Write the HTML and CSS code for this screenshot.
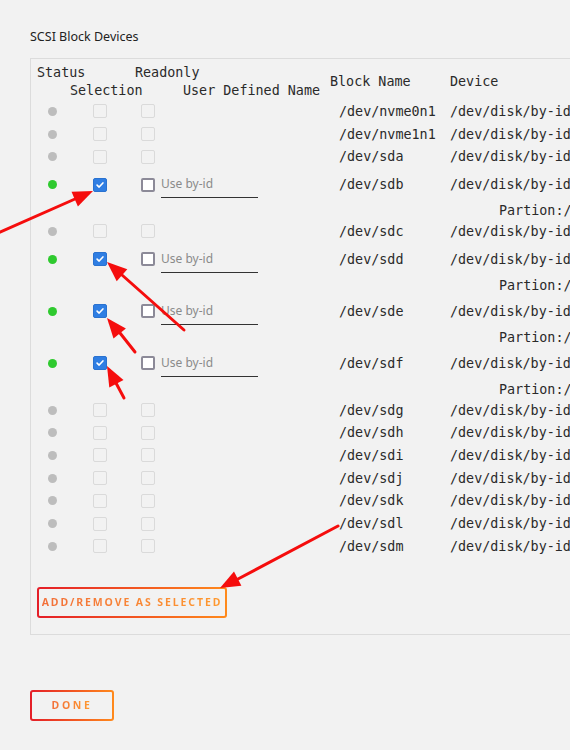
FILE: index.html
```html
<!DOCTYPE html>
<html lang="en">
<head>
  <meta charset="UTF-8">
  <meta name="viewport" content="width=device-width, initial-scale=1.0">
  <title>SCSI Block Devices</title>
  <link rel="stylesheet" href="styles.css">
</head>
<body>

  <div class="page">
    <h2 class="title">SCSI Block Devices</h2>

    <div class="panel">
      <div class="devices">
        <div class="head">
          <div class="head-pair">
            <div class="head-line"><span class="h-status">Status</span><span class="h-readonly">Readonly</span></div>
            <div class="head-line"><span class="h-selection">Selection</span><span class="h-name">User Defined Name</span></div>
          </div>
          <div class="h-block">Block Name</div>
          <div class="h-device">Device</div>
        </div>

        <div class="row">
          <span class="dot"></span><span class="box off"></span><span class="box off"></span><span></span>
          <span class="block">/dev/nvme0n1</span><span class="dev">/dev/disk/by-id/nvme-Samsung_SSD_970_EVO_Plus_1TB_S4EWNX0N</span>
        </div>
        <div class="row">
          <span class="dot"></span><span class="box off"></span><span class="box off"></span><span></span>
          <span class="block">/dev/nvme1n1</span><span class="dev">/dev/disk/by-id/nvme-Samsung_SSD_970_EVO_Plus_1TB_S4EWNX0R</span>
        </div>
        <div class="row">
          <span class="dot"></span><span class="box off"></span><span class="box off"></span><span></span>
          <span class="block">/dev/sda</span><span class="dev">/dev/disk/by-id/ata-WDC_WD40EFRX-68N32N0_WD-WCC7K1</span>
        </div>

        <div class="row sel">
          <span class="dot on"></span><span class="box checked"></span><span class="box ro"></span>
          <span class="name"><input type="text" placeholder="Use by-id"></span>
          <span class="block">/dev/sdb</span><span class="dev">/dev/disk/by-id/ata-ST4000VN008-2DR166_ZGY5A1</span>
        </div>
        <div class="part"><span class="dev">Partion:/dev/disk/by-id/ata-ST4000VN008-2DR166_ZGY5A1-part1</span></div>

        <div class="row">
          <span class="dot"></span><span class="box off"></span><span class="box off"></span><span></span>
          <span class="block">/dev/sdc</span><span class="dev">/dev/disk/by-id/ata-WDC_WD40EFRX-68N32N0_WD-WCC7K2</span>
        </div>

        <div class="row sel">
          <span class="dot on"></span><span class="box checked"></span><span class="box ro"></span>
          <span class="name"><input type="text" placeholder="Use by-id"></span>
          <span class="block">/dev/sdd</span><span class="dev">/dev/disk/by-id/ata-ST4000VN008-2DR166_ZGY5B7</span>
        </div>
        <div class="part"><span class="dev">Partion:/dev/disk/by-id/ata-ST4000VN008-2DR166_ZGY5B7-part1</span></div>

        <div class="row sel">
          <span class="dot on"></span><span class="box checked"></span><span class="box ro"></span>
          <span class="name"><input type="text" placeholder="Use by-id"></span>
          <span class="block">/dev/sde</span><span class="dev">/dev/disk/by-id/ata-ST4000VN008-2DR166_ZGY5C3</span>
        </div>
        <div class="part"><span class="dev">Partion:/dev/disk/by-id/ata-ST4000VN008-2DR166_ZGY5C3-part1</span></div>

        <div class="row sel">
          <span class="dot on"></span><span class="box checked"></span><span class="box ro"></span>
          <span class="name"><input type="text" placeholder="Use by-id"></span>
          <span class="block">/dev/sdf</span><span class="dev">/dev/disk/by-id/ata-ST4000VN008-2DR166_ZGY5D9</span>
        </div>
        <div class="part"><span class="dev">Partion:/dev/disk/by-id/ata-ST4000VN008-2DR166_ZGY5D9-part1</span></div>

        <div class="row">
          <span class="dot"></span><span class="box off"></span><span class="box off"></span><span></span>
          <span class="block">/dev/sdg</span><span class="dev">/dev/disk/by-id/ata-WDC_WD40EFRX-68N32N0_WD-WCC7K3</span>
        </div>
        <div class="row">
          <span class="dot"></span><span class="box off"></span><span class="box off"></span><span></span>
          <span class="block">/dev/sdh</span><span class="dev">/dev/disk/by-id/ata-WDC_WD40EFRX-68N32N0_WD-WCC7K4</span>
        </div>
        <div class="row">
          <span class="dot"></span><span class="box off"></span><span class="box off"></span><span></span>
          <span class="block">/dev/sdi</span><span class="dev">/dev/disk/by-id/ata-WDC_WD40EFRX-68N32N0_WD-WCC7K5</span>
        </div>
        <div class="row">
          <span class="dot"></span><span class="box off"></span><span class="box off"></span><span></span>
          <span class="block">/dev/sdj</span><span class="dev">/dev/disk/by-id/ata-WDC_WD40EFRX-68N32N0_WD-WCC7K6</span>
        </div>
        <div class="row">
          <span class="dot"></span><span class="box off"></span><span class="box off"></span><span></span>
          <span class="block">/dev/sdk</span><span class="dev">/dev/disk/by-id/ata-WDC_WD40EFRX-68N32N0_WD-WCC7K7</span>
        </div>
        <div class="row">
          <span class="dot"></span><span class="box off"></span><span class="box off"></span><span></span>
          <span class="block">/dev/sdl</span><span class="dev">/dev/disk/by-id/ata-WDC_WD40EFRX-68N32N0_WD-WCC7K8</span>
        </div>
        <div class="row">
          <span class="dot"></span><span class="box off"></span><span class="box off"></span><span></span>
          <span class="block">/dev/sdm</span><span class="dev">/dev/disk/by-id/ata-WDC_WD40EFRX-68N32N0_WD-WCC7K9</span>
        </div>
      </div>

      <button class="btn wide"><span>ADD/REMOVE AS SELECTED</span></button>
    </div>

    <button class="btn done"><span>DONE</span></button>
  </div>

  <!-- annotation arrows drawn over the page -->
  <svg class="arrows" width="570" height="750" viewBox="0 0 570 750">
    <g stroke="#f50d0d" stroke-width="3" fill="none" stroke-linecap="round">
      <line x1="-2" y1="233" x2="75" y2="199"/>
      <line x1="184" y1="330" x2="122" y2="275"/>
      <line x1="135" y1="352" x2="120" y2="333"/>
      <line x1="124" y1="398" x2="116" y2="383"/>
      <line x1="338" y1="526" x2="238" y2="579"/>
    </g>
    <g fill="#f50d0d">
      <polygon points="93,191 77.9,206.4 71.5,191.8"/>
      <polygon points="107,262 127.3,269.2 116.7,281.2"/>
      <polygon points="107,318 125.9,328.4 113.5,338.6"/>
      <polygon points="107,366 123.5,379.9 109.3,387.4"/>
      <polygon points="220,588 234,571.6 241.4,585.8"/>
    </g>
  </svg>

</body>
</html>
```

FILE: styles.css
```css
html, body {
  margin: 0;
  padding: 0;
  overflow: hidden;
  background-color: #f2f2f2;
}
body {
  font-family: 'Noto Sans', 'Open Sans', sans-serif;
  color: #222;
  width: 570px;
  height: 750px;
  position: relative;
}
.page {
  padding: 29px 0 0 30px;
}
.title {
  margin: 0 0 13px 0;
  font-size: 12.5px;
  font-weight: 400;
  line-height: 16px;
  color: #222;
}
.panel {
  width: 900px;
  border: 1px solid #dcdcdc;
  padding: 4px 0 16px 6px;
}
.devices {
  font-family: 'DejaVu Sans Mono', 'Liberation Mono', monospace;
  font-size: 13.4px;
  color: #2a2a2a;
  white-space: nowrap;
}
.head {
  display: flex;
  align-items: center;
  height: 37px;
}
.head-pair {
  width: 293px;
}
.head-line {
  height: 18px;
  line-height: 18px;
}
.h-status {
  display: inline-block;
  width: 98px;
}
.h-selection {
  display: inline-block;
  margin-left: 33px;
  width: 113px;
}
.h-block {
  width: 120px;
}
.row, .part {
  display: grid;
  grid-template-columns: 39px 48px 37px 178px 111px 1fr;
  align-items: center;
  height: 22.7px;
}
.row.sel {
  height: 33px;
}
.part {
  height: 19px;
}
.part .dev {
  grid-column: 6;
  padding-left: 49px;
}
.dot {
  width: 9px;
  height: 9px;
  border-radius: 50%;
  background-color: #bdbdbd;
  margin-left: 11px;
}
.dot.on {
  background-color: #2fca2f;
}
.box {
  width: 14px;
  height: 14px;
  box-sizing: border-box;
  border-radius: 2px;
  margin-left: 17px;
}
.box.off {
  border: 1.5px solid #dadada;
}
.box.ro {
  border: 2px solid #8c8a98;
  background-color: #fff;
}
.box.checked {
  background-color: #2f7ee3;
  background-image: url("data:image/svg+xml,%3Csvg xmlns='http://www.w3.org/2000/svg' viewBox='0 0 14 14'%3E%3Cpath d='M3.6 7.2 L6 9.4 L10.4 4.6' stroke='white' stroke-width='1.9' fill='none' stroke-linecap='round' stroke-linejoin='round'/%3E%3C/svg%3E");
  border: 1px solid #2a72d0;
}
.name input {
  width: 97px;
  box-sizing: border-box;
  border: none;
  border-bottom: 1px solid #333;
  background: transparent;
  padding: 0 0 5px 0;
  margin-top: 4px;
  font-family: 'Noto Sans', 'Open Sans', sans-serif;
  font-size: 12px;
  color: #333;
  outline: none;
}
.name input::placeholder {
  color: #8a8a8a;
}
.dev {
  overflow: hidden;
}
.btn {
  display: block;
  box-sizing: border-box;
  border: 2px solid transparent;
  border-radius: 3px;
  background: linear-gradient(#f2f2f2, #f2f2f2) padding-box,
              linear-gradient(90deg, #e41e28, #ff8a1c) border-box;
  font-family: 'Noto Sans', 'Open Sans', sans-serif;
  font-size: 10.5px;
  font-weight: 700;
  letter-spacing: 1.9px;
  cursor: pointer;
  padding: 0;
}
.btn span {
  background: linear-gradient(90deg, #f2703a, #ff9a30);
  -webkit-background-clip: text;
  background-clip: text;
  color: transparent;
}
.btn.wide {
  width: 190px;
  height: 31px;
  margin-top: 29px;
}
.btn.done {
  width: 84px;
  height: 31px;
  margin-top: 55px;
  letter-spacing: 2.6px;
}
.arrows {
  position: absolute;
  top: 0;
  left: 0;
  pointer-events: none;
}
```
